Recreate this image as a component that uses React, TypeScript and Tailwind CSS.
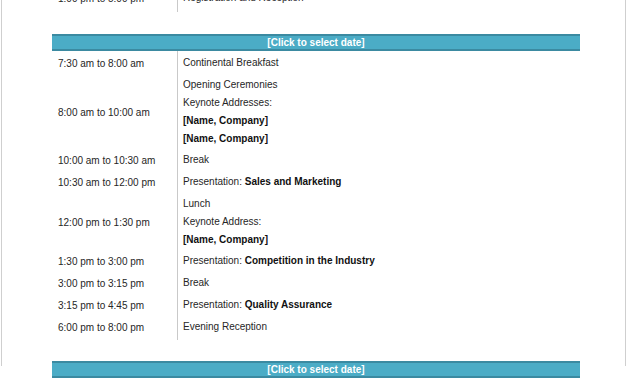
import React from 'react';

type Line = { label?: string; bold?: string };
type Row = { time: string; lines: Line[] };

const rows: Row[] = [
  { time: '7:30 am to 8:00 am', lines: [{ label: 'Continental Breakfast' }] },
  {
    time: '8:00 am to 10:00 am',
    lines: [
      { label: 'Opening Ceremonies' },
      { label: 'Keynote Addresses:' },
      { bold: '[Name, Company]' },
      { bold: '[Name, Company]' },
    ],
  },
  { time: '10:00 am to 10:30 am', lines: [{ label: 'Break' }] },
  { time: '10:30 am to 12:00 pm', lines: [{ label: 'Presentation:', bold: 'Sales and Marketing' }] },
  {
    time: '12:00 pm to 1:30 pm',
    lines: [{ label: 'Lunch' }, { label: 'Keynote Address:' }, { bold: '[Name, Company]' }],
  },
  { time: '1:30 pm to 3:00 pm', lines: [{ label: 'Presentation:', bold: 'Competition in the Industry' }] },
  { time: '3:00 pm to 3:15 pm', lines: [{ label: 'Break' }] },
  { time: '3:15 pm to 4:45 pm', lines: [{ label: 'Presentation:', bold: 'Quality Assurance' }] },
  { time: '6:00 pm to 8:00 pm', lines: [{ label: 'Evening Reception' }] },
];

function ScheduleRow({ row }: { row: Row }) {
  const pad = row.lines.length === 1 ? 'pt-[3px] pb-px' : 'pt-[3px]';
  return (
    <div className="grid grid-cols-[125px_1fr]">
      <div className={`flex items-center pl-[6px] ${pad}`}>{row.time}</div>
      <div className={`border-l border-[#c9c9c9] pl-[5px] ${pad}`}>
        {row.lines.map((l, i) => (
          <div key={i} className="h-[18px] leading-[18px] whitespace-nowrap">
            {l.label}
            {l.label && l.bold ? ' ' : ''}
            {l.bold && <span className="font-bold text-[#111]">{l.bold}</span>}
          </div>
        ))}
      </div>
    </div>
  );
}

function DateBar() {
  return (
    <div className="h-[17px] bg-[#4bacc6] border-y-2 border-[#3b8aa1] text-white font-bold text-center leading-[13px]">
      [Click to select date]
    </div>
  );
}

export default function App() {
  return (
    <div className="w-[630px] h-[380px] bg-white overflow-hidden font-['Liberation_Sans',Arial,sans-serif] text-[10px] text-[#262626]">
      <div className="ml-[1px] w-[625px] h-full border-x border-[#cfcfcf] pl-[50px] pr-[45px]">
        {/* cut-off row from the previous day */}
        <div className="-mt-[14px]">
          <ScheduleRow row={{ time: '1:00 pm to 5:00 pm', lines: [{ label: 'Registration and Reception' }] }} />
          <div className="ml-[125px] h-[4px] border-l border-[#c9c9c9]" />
        </div>

        <div className="mt-[22px]">
          <DateBar />
        </div>

        <div>
          {rows.map((r) => (
            <ScheduleRow key={r.time} row={r} />
          ))}
          <div className="ml-[125px] h-[3px] border-l border-[#c9c9c9]" />
        </div>

        <div className="mt-[21px]">
          <DateBar />
        </div>
      </div>
    </div>
  );
}
